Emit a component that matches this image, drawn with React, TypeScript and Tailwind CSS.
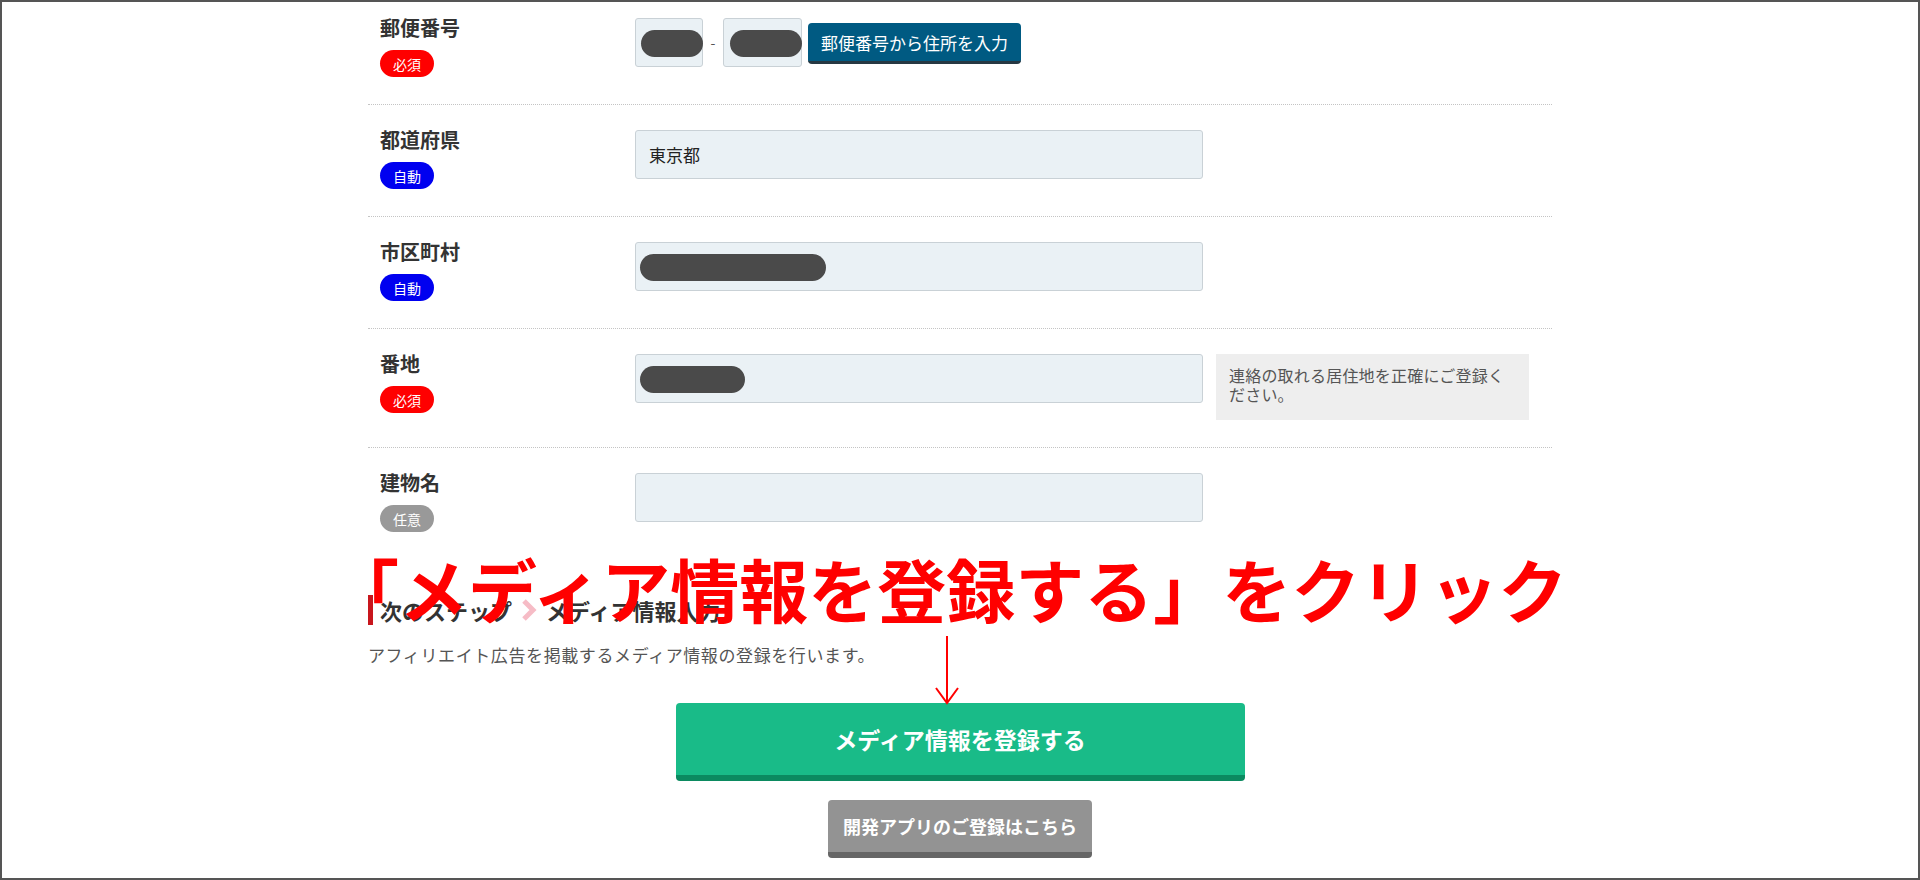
import React from "react";

const FONT = { fontFamily: '"Noto Sans CJK JP", "Noto Sans", sans-serif' };

function Badge({ kind }: { kind: "req" | "auto" | "opt" }) {
  const map = {
    req: { text: "必須", cls: "bg-[#ff0000]" },
    auto: { text: "自動", cls: "bg-[#0000f0]" },
    opt: { text: "任意", cls: "bg-[#999999]" },
  } as const;
  const b = map[kind];
  return (
    <div
      className={`mt-[12px] flex h-[27px] w-[54px] items-center justify-center rounded-full text-[14px] leading-none text-white ${b.cls}`}
    >
      {b.text}
    </div>
  );
}

function Row({
  label,
  badge,
  children,
  first,
  last,
}: {
  label: string;
  badge: "req" | "auto" | "opt";
  children: React.ReactNode;
  first?: boolean;
  last?: boolean;
}) {
  return (
    <div
      className={`flex pl-[12px] pb-[27px] ${first ? "pt-[16px]" : "pt-[25px]"} ${
        last ? "" : "border-b border-dotted border-[#c4c4c4]"
      }`}
    >
      <div className="w-[255px] shrink-0">
        <div className="text-[20px] font-bold leading-[20px] text-[#333333]">{label}</div>
        <Badge kind={badge} />
      </div>
      <div className="flex items-start">{children}</div>
    </div>
  );
}

function Field({ children, className = "" }: { children?: React.ReactNode; className?: string }) {
  return (
    <div
      className={`relative h-[49px] rounded-[3px] border border-[#c9d1d6] bg-[#eaf1f5] ${className}`}
    >
      {children}
    </div>
  );
}

function Blob({ className }: { className: string }) {
  return <div className={`absolute h-[27px] rounded-full bg-[#4a4a4a] ${className}`} />;
}

export default function App() {
  return (
    <div
      className="relative h-[880px] w-full overflow-hidden border-2 border-[#555555] bg-white"
      style={FONT}
    >
      <div className="mx-auto w-[1184px]">
        <Row label="郵便番号" badge="req" first>
          <Field className="w-[68px]">
            <Blob className="left-[5px] right-[-1px] top-[11px]" />
          </Field>
          <div className="flex h-[49px] w-[20px] items-center justify-center text-[14px] text-[#555555]">
            -
          </div>
          <Field className="w-[79px]">
            <Blob className="left-[6px] right-[-1px] top-[11px]" />
          </Field>
          <button className="ml-[6px] mt-[5px] flex h-[41px] w-[213px] items-center justify-center rounded-[4px] border-b-[3px] border-[#263843] bg-[#005a82] text-[17px] leading-none text-white">
            郵便番号から住所を入力
          </button>
        </Row>

        <Row label="都道府県" badge="auto">
          <Field className="flex w-[568px] items-center px-[13px] text-[17px] text-[#222222]">
            東京都
          </Field>
        </Row>

        <Row label="市区町村" badge="auto">
          <Field className="w-[568px]">
            <Blob className="left-[4px] top-[11px] w-[186px]" />
          </Field>
        </Row>

        <Row label="番地" badge="req">
          <Field className="w-[568px]">
            <Blob className="left-[4px] top-[11px] w-[105px]" />
          </Field>
          <div className="ml-[13px] h-[66px] w-[313px] bg-[#eeeeee] px-[13px] pt-[12px] text-[16px] leading-[19px] tracking-[0.2px] text-[#555555]">
            連絡の取れる居住地を正確にご登録ください。
          </div>
        </Row>

        <Row label="建物名" badge="opt" last>
          <Field className="w-[568px]" />
        </Row>

        <div className="mt-[36px] flex h-[30px] items-center border-l-[5px] border-[#c8161d] pl-[7px] text-[22px] font-bold leading-[30px] text-[#333333]">
          <span>次のステップ</span>
          <svg width="22" height="24" viewBox="0 0 22 24" className="mx-[6px]">
            <polyline
              points="6,3 15,12 6,21"
              fill="none"
              stroke="#f6bcc6"
              strokeWidth="5"
              strokeLinejoin="miter"
            />
          </svg>
          <span>メディア情報入力</span>
        </div>

        <p className="mt-[18px] text-[17px] leading-[24px] tracking-[0.6px] text-[#555555]">
          アフィリエイト広告を掲載するメディア情報の登録を行います。
        </p>

        <button className="mx-auto mt-[36px] flex h-[78px] w-[569px] items-center justify-center rounded-[4px] border-b-[6px] border-[#0b8a60] bg-[#19bb88] text-[23px] font-bold text-white">
          メディア情報を登録する
        </button>

        <button className="mx-auto mt-[19px] flex h-[58px] w-[264px] items-center justify-center rounded-[4px] border-b-[6px] border-[#666666] bg-[#939393] text-[18px] font-bold text-white">
          開発アプリのご登録はこちら
        </button>
      </div>

      <div className="absolute left-[328px] top-[552px] whitespace-nowrap text-[69px] font-bold leading-[69px] text-[#ff0000]">
        「メディア情報を登録する」をクリック
      </div>

      <svg
        className="absolute left-[933px] top-[634px]"
        width="24"
        height="70"
        viewBox="0 0 24 70"
      >
        <line x1="12" y1="0" x2="12" y2="67" stroke="#ff0000" strokeWidth="2" />
        <polyline points="1,52 12,67 23,52" fill="none" stroke="#ff0000" strokeWidth="2" />
      </svg>
    </div>
  );
}
